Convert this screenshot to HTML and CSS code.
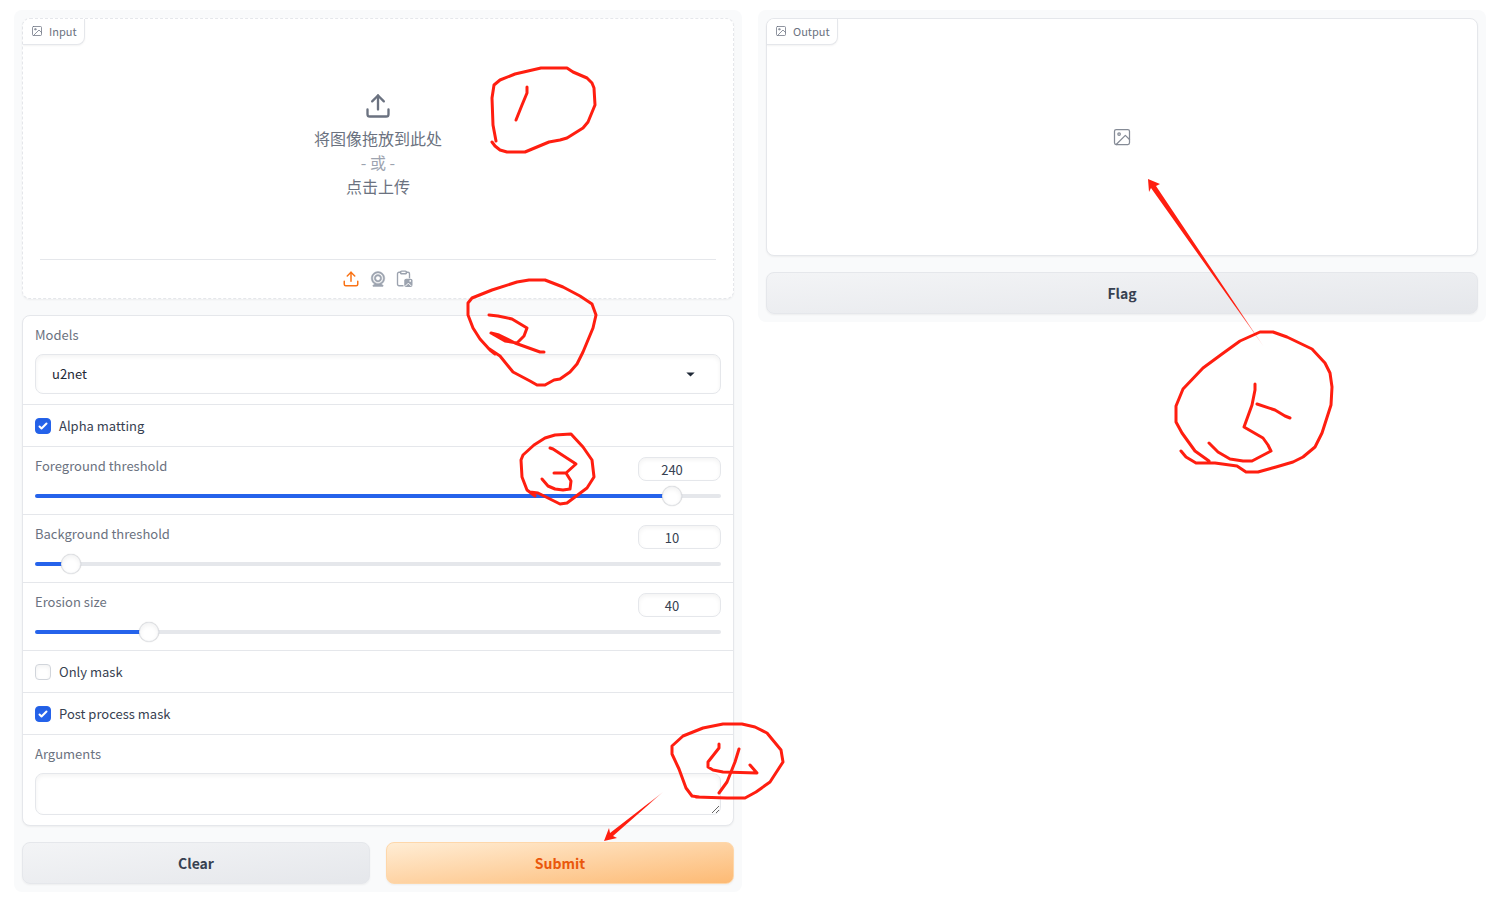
FILE: index.html
```html
<!DOCTYPE html>
<html lang="zh-CN">

<head>
    <meta charset="utf-8">
    <title>Remove background</title>
    <link rel="stylesheet" href="styles.css">
</head>

<body>

    <!-- shared icons -->
    <svg class="defs" width="0" height="0">
        <symbol id="icon_image" viewBox="0 0 24 24">
            <rect x="3" y="3" width="18" height="18" rx="2" ry="2"></rect>
            <circle cx="8.5" cy="8.5" r="1.5"></circle>
            <polyline points="21 15 16 10 5 21"></polyline>
        </symbol>
        <symbol id="icon_upload" viewBox="0 0 24 24">
            <path d="M21 15v4a2 2 0 0 1-2 2H5a2 2 0 0 1-2-2v-4"></path>
            <polyline points="17 8 12 3 7 8"></polyline>
            <line x1="12" y1="3" x2="12" y2="15"></line>
        </symbol>
    </svg>

    <main id="app">
        <!-- input side -->
        <section class="panel">
            <div class="block upload_block">
                <div class="tag"><svg class="icon tag_icon"><use href="#icon_image"></use></svg>Input</div>
                <button class="drop">
                    <svg class="icon drop_icon"><use href="#icon_upload"></use></svg>
                    <span>将图像拖放到此处</span>
                    <span class="or">- 或 -</span>
                    <span>点击上传</span>
                </button>
                <div class="sources">
                    <button class="source selected" aria-label="Upload file">
                        <svg class="icon"><use href="#icon_upload"></use></svg>
                    </button>
                    <button class="source" aria-label="Capture from camera">
                        <svg viewBox="0 0 24 24" fill="currentColor" stroke="currentColor" stroke-width="0.6">
                            <path d="M12 2c-4.963 0-9 4.038-9 9c0 3.328 1.82 6.232 4.513 7.79l-2.067 1.378A1 1 0 0 0 6 22h12a1 1 0 0 0 .555-1.832l-2.067-1.378C19.18 17.232 21 14.328 21 11c0-4.962-4.037-9-9-9zm0 16c-3.859 0-7-3.141-7-7c0-3.86 3.141-7 7-7s7 3.14 7 7c0 3.859-3.141 7-7 7z"></path>
                            <path d="M12 6c-2.757 0-5 2.243-5 5s2.243 5 5 5s5-2.243 5-5s-2.243-5-5-5zm0 8c-1.654 0-3-1.346-3-3s1.346-3 3-3s3 1.346 3 3s-1.346 3-3 3z"></path>
                        </svg>
                    </button>
                    <button class="source" aria-label="Paste from clipboard">
                        <svg viewBox="0 0 24 24" fill="none" stroke="currentColor" stroke-width="1.8">
                            <path d="M10 21H4a2 2 0 0 1-2-2V5a2 2 0 0 1 2-2H7M13 3h3a2 2 0 0 1 2 2v6"></path>
                            <rect x="6" y="1.5" width="8" height="3.5" rx="1.5"></rect>
                            <rect x="11" y="11.5" width="11" height="11" rx="2.5" fill="currentColor" stroke="none"></rect>
                            <circle cx="19" cy="14.5" r="1.2" fill="#fff" stroke="none"></circle>
                            <path d="M12.5 21.500l4-4 4 4" stroke="#fff" stroke-width="1.3"></path>
                        </svg>
                    </button>
                </div>
            </div>

            <form id="options" class="block" onsubmit="return false">
                <div class="row">
                    <label class="title" for="models">Models</label>
                    <div class="select_wrap">
                        <select id="models" class="field">
                            <option>u2net</option>
                            <option>u2netp</option>
                            <option>isnet-general-use</option>
                        </select>
                        <svg class="caret" viewBox="0 0 10 6"><path d="M0 0.5h10L5 5.5z"></path></svg>
                    </div>
                </div>
                <div class="row">
                    <label class="check"><input type="checkbox" checked>Alpha matting</label>
                </div>
                <div class="row slider">
                    <div class="head">
                        <label class="title" for="fg">Foreground threshold</label>
                        <input type="number" class="field num" value="240" aria-label="Foreground threshold value">
                    </div>
                    <input type="range" id="fg" min="0" max="255" value="240" style="--fill: 94%">
                </div>
                <div class="row slider">
                    <div class="head">
                        <label class="title" for="bg">Background threshold</label>
                        <input type="number" class="field num" value="10" aria-label="Background threshold value">
                    </div>
                    <input type="range" id="bg" min="0" max="255" value="10" style="--fill: 4%">
                </div>
                <div class="row slider">
                    <div class="head">
                        <label class="title" for="erosion">Erosion size</label>
                        <input type="number" class="field num" value="40" aria-label="Erosion size value">
                    </div>
                    <input type="range" id="erosion" min="0" max="255" value="40" style="--fill: 16%">
                </div>
                <div class="row">
                    <label class="check"><input type="checkbox">Only mask</label>
                </div>
                <div class="row">
                    <label class="check"><input type="checkbox" checked>Post process mask</label>
                </div>
                <div class="row">
                    <label class="title" for="args">Arguments</label>
                    <textarea id="args" class="field" rows="1"></textarea>
                </div>
            </form>

            <div class="btns">
                <button class="btn">Clear</button>
                <button class="btn primary">Submit</button>
            </div>
        </section>

        <!-- output side -->
        <section class="panel">
            <div class="block output_block">
                <div class="tag"><svg class="icon tag_icon"><use href="#icon_image"></use></svg>Output</div>
                <svg class="icon empty_icon"><use href="#icon_image"></use></svg>
            </div>
            <div class="btns">
                <button class="btn">Flag</button>
            </div>
        </section>
    </main>

    <!-- red pen marks over the page -->
    <svg id="marks" width="1496" height="905" viewBox="0 0 1496 905" aria-hidden="true">
        <defs>
            <linearGradient id="fade4" gradientUnits="userSpaceOnUse" x1="663" y1="793" x2="604" y2="841">
                <stop offset="0" stop-color="#ff1e10" stop-opacity="0.3"></stop>
                <stop offset="0.25" stop-color="#ff1e10"></stop>
            </linearGradient>
            <linearGradient id="fade5" gradientUnits="userSpaceOnUse" x1="1264" y1="347" x2="1148" y2="179">
                <stop offset="0" stop-color="#ff1e10" stop-opacity="0.3"></stop>
                <stop offset="0.25" stop-color="#ff1e10"></stop>
            </linearGradient>
        </defs>
        <g class="pen">
            <!-- step 1 -->
            <path d="M496 141L493 125L492 98L494 85L500 80L515 74L541 68L567 68L573 72L587 78L592 83L594 88L595 105L588 122L583 128L567 138L560 140L549 142L525 152L507 152L500 150L495 146L492 142"></path>
            <path d="M527 87L527 93L522 105L516 120"></path>
            <!-- step 2 -->
            <path d="M495 354L490 350L480 339L473 328L468 315L468 303L472 298L492 290L517 282L529 280L545 280L563 287L580 296L592 304L596 315L593 328L583 352L577 364L570 372L560 379L554 380L545 385L537 385L530 381L513 372L500 356L488 348"></path>
            <path d="M489 315L498 316L512 319L527 328L524 336L517 343L505 341L491 333L499 335L515 343L540 352L544 352"></path>
            <!-- step 3 -->
            <path d="M535 496L527 490L522 477L521 460L523 455L534 445L545 438L555 435L571 434L583 447L592 460L594 477L587 488L567 503L560 504L550 499L538 493L530 492"></path>
            <path d="M550 448L553 449L576 464L566 473L554 473L566 473L571 481L570 489L563 490L555 489L548 486L542 479"></path>
            <!-- step 4 -->
            <path d="M699 797L692 796L686 788L679 769L672 754L672 746L683 736L703 728L723 724L742 724L755 727L767 733L781 750L783 762L770 782L756 792L745 798L727 798L696 797"></path>
            <path d="M719 744L719 748L708 762L708 767L713 770L723 772L757 773L750 765"></path>
            <path d="M739 749L735 762L727 782L719 793"></path>
            <!-- step 5 -->
            <path d="M1209 461L1195 451L1182 433L1176 422L1176 406L1183 389L1203 368L1222 354L1240 341L1260 332L1273 332L1287 337L1312 349L1325 363L1330 373L1332 387L1331 405L1322 433L1315 447L1303 457L1293 462L1276 467L1258 472L1246 472L1237 466L1215 463L1196 463L1186 457L1181 451"></path>
            <path d="M1255 384L1255 390L1252 405L1248 416L1244 427L1263 438L1268 445L1271 451L1252 461L1243 461L1230 459L1218 452L1209 443"></path>
            <path d="M1257 404L1275 410L1285 416L1290 418"></path>
        </g>
        <path fill="url(#fade4)" d="M604 841L609 828L610 833L663 792L613 836L617 838z"></path>
        <path fill="url(#fade5)" d="M1148 179L1160 184L1156 186L1264 347L1151 188L1149 192z"></path>
    </svg>

</body>
</html>
```

FILE: styles.css
```css
* {
    box-sizing: border-box;
}

body {
    margin: 0;
    position: relative;
    background-color: white;
    color: #1f2937;
    font-family: "Noto Sans CJK SC", sans-serif;
    font-size: 13px;
    line-height: 20px;
}

button, input, select, textarea {
    font: inherit;
    color: inherit;
    margin: 0;
}

button {
    border: none;
    background: none;
    padding: 0;
    cursor: pointer;
}

.defs {
    position: absolute;
}

#app {
    display: grid;
    grid-template-columns: 1fr 1fr;
    gap: 16px;
    align-items: start;
    padding: 10px 10px 10px 14px;
}

.panel {
    display: flex;
    flex-direction: column;
    gap: 16px;
    padding: 8px;
    border-radius: 8px;
    background-color: #f9fafb;
}

.block {
    position: relative;
    border: 1px solid #e5e7eb;
    border-radius: 8px;
    background-color: white;
    box-shadow: 0 1px 2px rgba(0, 0, 0, 0.05);
}

.icon {
    fill: none;
    stroke: currentColor;
    stroke-width: 2;
    stroke-linecap: round;
    stroke-linejoin: round;
}

/* corner label of a block */
.tag {
    position: absolute;
    top: 0;
    left: 0;
    display: flex;
    align-items: center;
    gap: 6px;
    height: 26px;
    padding: 0 7px 2px 8px;
    border: 1px solid #e5e7eb;
    border-top: none;
    border-left: none;
    border-radius: 7px 0 8px 0;
    background-color: white;
    box-shadow: 0 1px 2px rgba(0, 0, 0, 0.05);
    color: #6b7280;
    font-size: 11px;
}

.tag_icon {
    width: 12px;
    height: 12px;
    stroke-width: 1.5;
}

/* upload area */
.upload_block {
    border-style: dashed;
}

.drop {
    display: flex;
    flex-direction: column;
    align-items: center;
    justify-content: center;
    width: 100%;
    height: 240px;
    padding-top: 12px;
    color: #6b7280;
    font-size: 16px;
    line-height: 24px;
}

.drop_icon {
    width: 28px;
    height: 28px;
    margin-bottom: 6px;
}

.or {
    color: #9ca3af;
}

.sources {
    display: flex;
    align-items: center;
    justify-content: center;
    gap: 9px;
    height: 39px;
    margin: 0 17px;
    border-top: 1px solid #e5e7eb;
}

.source {
    color: #9ca3af;
}

.source svg {
    display: block;
    width: 18px;
    height: 18px;
}

.selected {
    color: #f97316;
}

/* options */
.row {
    padding: 10px 12px;
    border-bottom: 1px solid #e5e7eb;
}

.row:last-child {
    border-bottom: none;
}

.title {
    display: block;
    margin-bottom: 10px;
    color: #6b7280;
    line-height: 18px;
}

.field {
    display: block;
    width: 100%;
    border: 1px solid #e5e7eb;
    border-radius: 8px;
    background-color: white;
    box-shadow: inset 0 2px 4px rgba(0, 0, 0, 0.05);
    outline: none;
}

.select_wrap {
    position: relative;
}

#models {
    height: 40px;
    padding: 0 16px;
    appearance: none;
}

.caret {
    position: absolute;
    top: 18px;
    right: 26px;
    width: 9px;
    height: 5px;
    fill: #1f2937;
    pointer-events: none;
}

#args {
    height: 42px;
    padding: 10px;
    resize: vertical;
}

.check {
    display: flex;
    align-items: center;
    gap: 8px;
    color: #374151;
    line-height: 21px;
}

.check input {
    appearance: none;
    width: 16px;
    height: 16px;
    border: 1px solid #d1d5db;
    border-radius: 4px;
    box-shadow: inset 0 2px 4px rgba(0, 0, 0, 0.05);
}

.check input:checked {
    border-color: #2563eb;
    background: #2563eb url("data:image/svg+xml,%3Csvg viewBox='0 0 16 16' fill='white' xmlns='http://www.w3.org/2000/svg'%3E%3Cpath d='M12.207 4.793a1 1 0 010 1.414l-5 5a1 1 0 01-1.414 0l-2-2a1 1 0 011.414-1.414L6.5 9.086l4.293-4.293a1 1 0 011.414 0z'/%3E%3C/svg%3E") center / 16px 16px no-repeat;
}

.slider {
    padding-bottom: 8px;
}

.head {
    display: flex;
    justify-content: space-between;
    height: 24px;
}

.num {
    width: 83px;
    height: 24px;
    padding: 0;
    color: #374151;
    text-align: center;
}

input[type=range] {
    appearance: none;
    display: block;
    width: 100%;
    height: 20px;
    margin-top: 5px;
    background: none;
}

input[type=range]::-webkit-slider-runnable-track {
    height: 4px;
    border-radius: 2px;
    background: linear-gradient(to right, #2563eb var(--fill), #e5e7eb var(--fill));
}

input[type=range]::-webkit-slider-thumb {
    appearance: none;
    width: 20px;
    height: 20px;
    margin-top: -8px;
    border: 1px solid #e5e7eb;
    border-radius: 50%;
    background-color: white;
    box-shadow: inset 0 2px 4px rgba(0, 0, 0, 0.05), 0 0 1px rgba(0, 0, 0, 0.3);
}

/* buttons */
.btns {
    display: flex;
    gap: 16px;
}

.btn {
    flex: 1;
    height: 42px;
    border: 1px solid #e5e7eb;
    border-radius: 8px;
    background: linear-gradient(to bottom right, #f3f4f6, #e5e7eb);
    box-shadow: 0 1px 2px rgba(0, 0, 0, 0.05);
    color: #374151;
    font-size: 14px;
    font-weight: 600;
}

.primary {
    border-color: #fed7aa;
    background: linear-gradient(to bottom right, #ffedd5, #fdba74);
    color: #ea580c;
}

/* output */
.output_block {
    display: flex;
    align-items: center;
    justify-content: center;
    height: 238px;
}

.empty_icon {
    width: 20px;
    height: 20px;
    stroke-width: 1.5;
    color: #858b96;
}

#marks {
    position: absolute;
    top: 0;
    left: 0;
    pointer-events: none;
}

.pen {
    fill: none;
    stroke: #ff1e10;
    stroke-width: 3;
    stroke-linecap: round;
    stroke-linejoin: round;
}
```
